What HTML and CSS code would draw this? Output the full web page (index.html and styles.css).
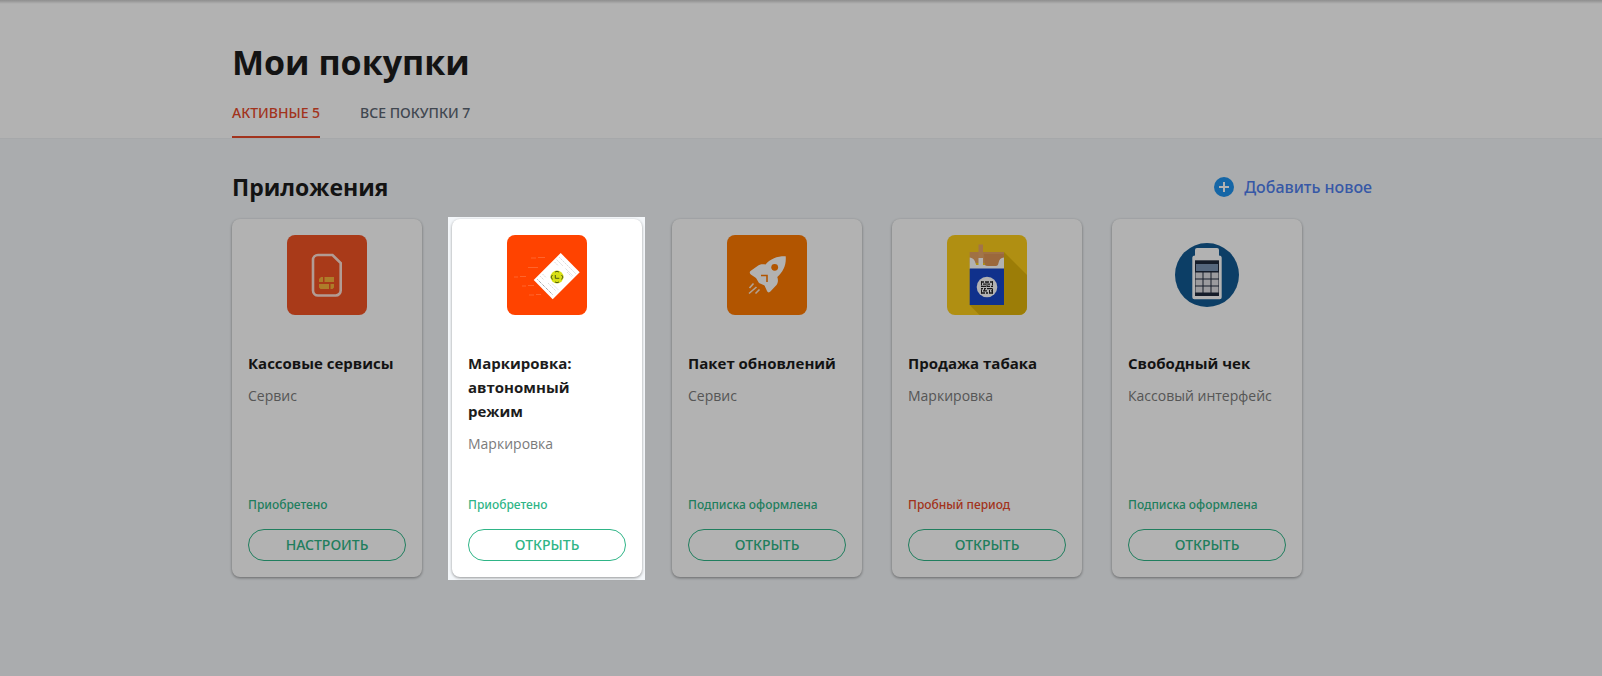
FILE: index.html
```html
<!DOCTYPE html>
<html lang="ru">
<head>
<meta charset="utf-8">
<title>Мои покупки</title>
<link rel="stylesheet" href="styles.css">
</head>
<body>
<header class="header">
  <div class="container">
    <h1 class="page-title">Мои покупки</h1>
    <nav class="tabs">
      <a class="tab tab-active" href="#active">АКТИВНЫЕ 5</a>
      <a class="tab" href="#all">ВСЕ ПОКУПКИ 7</a>
    </nav>
  </div>
</header>
<main class="container">
  <div class="section-head">
    <h2 class="section-title">Приложения</h2>
    <a class="add-link" href="#add">
      <svg class="add-icon" viewBox="0 0 20 20" aria-hidden="true"><circle cx="10" cy="10" r="10" fill="#1f93ee"/><path d="M10 5v10M5 10h10" stroke="#fff" stroke-width="2"/></svg>
      Добавить новое
    </a>
  </div>
  <div class="cards">
    <article class="card">
      <svg class="card-icon" viewBox="0 0 80 80" aria-hidden="true">
        <rect width="80" height="80" rx="8" fill="#f35325"/>
        <path d="M31 20H45.500L53.700 28V55.500a5 5 0 0 1-5 5H31a5 5 0 0 1-5-5V25a5 5 0 0 1 5-5z" fill="none" stroke="#ffe0d4" stroke-width="2.600"/>
        <path d="M34 42h2v5h-4v-3zM37.500 42H47v5h-9.500zM32 49h10v5h-8.500L32 52.500zM43.500 49H47v3.500L45.500 54h-2z" fill="#f9b23d"/>
      </svg>
      <h3 class="card-title">Кассовые сервисы</h3>
      <p class="card-type">Сервис</p>
      <p class="status">Приобретено</p>
      <button class="btn" type="button">НАСТРОИТЬ</button>
    </article>
    <article class="card card-focus">
      <svg class="card-icon" viewBox="0 0 80 80" aria-hidden="true">
        <rect width="80" height="80" rx="8" fill="#ff4300"/>
        <path d="M24 23h5m2-.5h7M21 32.500h10M7 42h4m2-.5h6M15 51h4m2-.5h6M22 60h5m2-.5h5" stroke="#ff7a48" stroke-width=".6"/>
        <path d="M53.700 18L72.700 37.300 45.700 64.300 26.700 45z" fill="#fff"/>
        <path d="M52 22L69 39M49.500 24.500L56 31M58.500 33.500L66 41M47.500 27L51 30.500M60 37L64.500 41.500M35.500 39L39 42.500M45 48.500L51.500 55M41 48L49 56M33 41L37 45" stroke="#cfcfcf" stroke-width=".7" stroke-dasharray="2 .7"/>
        <path d="M30.500 44.500L46 60" stroke="#777" stroke-width=".9" stroke-dasharray="1 1"/>
        <circle cx="50" cy="42" r="6.500" fill="#d8e016"/>
        <path d="M45.500 40l-1.500 2 1.500 2.500M54.500 40l1.500 2-1.500 2.500M48 37l2-.7 2 .7M48 47l2 .7 2-.7M48.300 40v3.300h4" fill="none" stroke="#505b14" stroke-width="1"/>
      </svg>
      <h3 class="card-title">Маркировка: автономный режим</h3>
      <p class="card-type">Маркировка</p>
      <p class="status">Приобретено</p>
      <button class="btn" type="button">ОТКРЫТЬ</button>
    </article>
    <article class="card">
      <svg class="card-icon" viewBox="0 0 80 80" aria-hidden="true">
        <rect width="80" height="80" rx="8" fill="#ff7a00"/>
        <path d="M58.700 21.300C51 21 43.500 23.500 38.500 29.500c-3-.8-6-.3-8 1.500L23.500 36c-1.200 1-.9 2.600.3 3.400L29 43l3 5 5.500 2.500L40 56c.6 1.600 2.300 1.900 3.400.6L49.500 50c1.700-2.200 1.800-5 .8-8C56 37 59.500 30 58.700 21.300z" fill="#fff"/>
        <circle cx="47.700" cy="32.300" r="3.400" fill="#ff7a00"/>
        <path d="M34 40.500h6v6.500" fill="none" stroke="#ff7a00" stroke-width="1.600"/>
        <path d="M26.500 48.500L22.500 53M29.500 52L22 58.500M32.500 54.500L28.500 58.500" stroke="#ffe9d4" stroke-width="1.600"/>
      </svg>
      <h3 class="card-title">Пакет обновлений</h3>
      <p class="card-type">Сервис</p>
      <p class="status">Подписка оформлена</p>
      <button class="btn" type="button">ОТКРЫТЬ</button>
    </article>
    <article class="card">
      <svg class="card-icon" viewBox="0 0 80 80" aria-hidden="true">
        <rect width="80" height="80" rx="8" fill="#fccd1a"/>
        <path d="M57 17L80 40V72a8 8 0 0 1-8 8H32.500L22.700 70z" fill="#e0b40b"/>
        <path d="M22.700 17H57v11H22.700z" fill="#e5a262"/>
        <path d="M37 19h20v7l-3 5H38z" fill="#de9657"/>
        <path d="M31.500 9.500H36V24h-4.500z" fill="#e8a668"/>
        <path d="M22.700 22.500q4 .5 5 3.500l1.500 4h2.300V23H36v7h2q.5 1 3 1h8q2 0 2.500-3 .8-5.300 5.500-5.500V34H22.700z" fill="#fff"/>
        <path d="M22.700 33.500H57V70H22.700z" fill="#1747c9"/>
        <circle cx="40" cy="52" r="10.300" fill="#fff"/>
        <path d="M34 47h3m1 0h4m1 0h3M34 49.200h1m1 0h3m2 0h2m2 0h1M34 51.400h5m1 0h3m1 0h2M34 53.600h2m1 0h2m1 0h5M34 55.800h1m1 0h4m2 0h1m1 0h2M34 58h4m1 0h2m1 0h4" stroke="#242424" stroke-width="1.300"/>
        <path d="M34.500 46.400v4m0 4v4M45.500 46.400v4m0 3v5M40 47v5M37.500 53v3M42.500 55v3" stroke="#242424" stroke-width="1"/>
      </svg>
      <h3 class="card-title">Продажа табака</h3>
      <p class="card-type">Маркировка</p>
      <p class="status status-trial">Пробный период</p>
      <button class="btn" type="button">ОТКРЫТЬ</button>
    </article>
    <article class="card">
      <svg class="card-icon" viewBox="0 0 80 80" aria-hidden="true">
        <circle cx="40" cy="40" r="32" fill="#125a92"/>
        <path d="M30 13H50q2 0 2 2V20.500q2.700 0 2.700 2V62.300q0 2-2 2H27.300q-2 0-2-2V22.500q0-2 2.700-2V15q0-2 2-2z" fill="#fff"/>
        <path d="M28 25.300H52V61H28z" fill="#1f2a3d"/>
        <path d="M29 29h22v7H29z" fill="#7a94b3"/>
        <path d="M28.500 37.500h7v6h-7zM36.500 37.500h7v6h-7zM44.500 37.500h7v6h-7zM28.500 44.500h7v6h-7zM36.500 44.500h7v6h-7zM44.500 44.500h7v6h-7zM28.500 51.500h7v6h-7zM36.500 51.500h7v6h-7zM44.500 51.500h7v6h-7z" fill="#dedfe3"/>
      </svg>
      <h3 class="card-title">Свободный чек</h3>
      <p class="card-type">Кассовый интерфейс</p>
      <p class="status">Подписка оформлена</p>
      <button class="btn" type="button">ОТКРЫТЬ</button>
    </article>
  </div>
</main>
</body>
</html>
```
FILE: styles.css
```css
* { box-sizing: border-box; }
body {
  margin: 0;
  min-height: 100vh;
  overflow: hidden;
  background: #f4f7fa;
  color: #1c1c1c;
  font-family: "Open Sans", "Noto Sans", sans-serif;
}
h1, h2, h3, p { margin: 0; }
.container {
  width: 100%;
  max-width: 1142px;
  margin: 0 auto;
  padding-left: 2px;
}
.header {
  padding-top: 36px;
  background: linear-gradient(rgba(0, 0, 0, 0.2), transparent 4px) #fff;
  border-bottom: 1px solid #eef1f4;
}
.page-title {
  font-size: 34px;
  line-height: 52px;
  font-weight: 700;
}
.tabs { display: flex; gap: 40px; }
.tab {
  padding: 15px 0 13px;
  border-bottom: 2px solid transparent;
  color: #5c6673;
  font-family: "Noto Sans", "Open Sans", sans-serif;
  font-size: 14px;
  line-height: 20px;
  font-weight: 500;
  text-decoration: none;
}
.tab-active { color: #e8492a; border-color: #e8492a; }
.section-head {
  display: flex;
  justify-content: space-between;
  align-items: center;
  padding: 32px 0 16px;
}
.section-title { font-size: 23px; line-height: 32px; font-weight: 700; }
.add-link {
  display: flex;
  align-items: center;
  gap: 10px;
  color: #4f7fee;
  font-family: "Noto Sans", "Open Sans", sans-serif;
  font-size: 16px;
  line-height: 24px;
  font-weight: 500;
  text-decoration: none;
}
.add-icon { width: 20px; height: 20px; }
.cards { display: flex; flex-wrap: wrap; gap: 30px; }
.card {
  position: relative;
  display: flex;
  flex-direction: column;
  width: 190px;
  min-height: 358px;
  padding: 16px;
  border-radius: 8px;
  background: #fff;
  box-shadow: 0 1px 3px rgba(0, 0, 0, 0.4);
}
/* Dims the whole page around the highlighted card */
.card-focus::after {
  content: "";
  position: absolute;
  inset: -2px -3px -3px -4px;
  z-index: 10;
  box-shadow: 0 0 0 2000px rgba(0, 0, 0, 0.3);
  pointer-events: none;
}
.card-icon {
  width: 80px;
  height: 80px;
  margin-bottom: 36px;
  align-self: center;
}
.card-title {
  margin-bottom: 9px;
  font-size: 15px;
  line-height: 24px;
  font-weight: 700;
}
.card-type { color: #7b7b7b; font-size: 14px; line-height: 24px; }
.status {
  margin: auto 0 16px;
  color: #2fb587;
  font-family: "Noto Sans", "Open Sans", sans-serif;
  font-size: 12px;
  line-height: 16px;
  font-weight: 500;
}
.status-trial { color: #e8492a; }
.btn {
  height: 32px;
  padding: 0;
  border: 1px solid #2fb587;
  border-radius: 16px;
  background: transparent;
  color: #2fb587;
  font: 500 14px/20px "Noto Sans", "Open Sans", sans-serif;
}
```
